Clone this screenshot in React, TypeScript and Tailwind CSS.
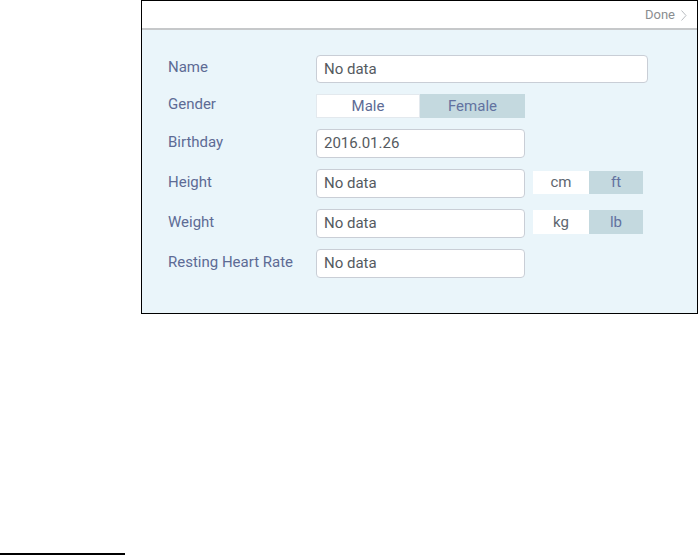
import * as React from "react";

const font = { fontFamily: "Roboto, 'Liberation Sans', sans-serif" };

function Field({ value, wide }: { value: string; wide?: boolean }) {
  return (
    <div
      className={`flex items-center h-full rounded-[4px] border border-[#c9ced6] bg-white pl-[7px] text-[15px] text-[#555a60] ${
        wide ? "w-[332px]" : "w-[209px]"
      }`}
    >
      {value}
    </div>
  );
}

function Toggle({ options, active, cell }: { options: string[]; active: number; cell: string[] }) {
  return (
    <div className="flex h-full">
      {options.map((o, i) => (
        <div
          key={o}
          className={`flex items-center justify-center text-[15px] ${cell[i]} ${
            i === active ? "bg-[#c4d9df] text-[#6272a0]" : "bg-white text-[#5d6b95] border border-[#e3e9ee]"
          }`}
        >
          {o}
        </div>
      ))}
    </div>
  );
}

function Row({ label, h, children }: { label: string; h: string; children: React.ReactNode }) {
  return (
    <div className={`flex items-center ${h}`}>
      <div className="w-[148px] text-[15px] text-[#5d6b95] leading-none -mt-[3px]">{label}</div>
      <div className="flex items-center h-full">{children}</div>
    </div>
  );
}

export default function App() {
  return (
    <div className="h-[555px] w-[698px] bg-white flex flex-col" style={font}>
      <div className="ml-[141px] w-[557px] h-[314px] border border-black flex flex-col">
        <header className="h-[29px] bg-white border-b-2 border-[#c6c8ca] flex items-center justify-end pr-[10px] gap-[6px]">
          <span className="text-[13px] text-[#8a8d90]">Done</span>
          <svg width="6" height="11" viewBox="0 0 6 11" className="mt-[1px]">
            <path d="M0.5 0.5 L5 5.5 L0.5 10.5" fill="none" stroke="#b8bcc0" strokeWidth="1" />
          </svg>
        </header>

        <div className="flex-1 bg-[#eaf5fa] pl-[26px] pt-[25px] flex flex-col gap-[11px]">
          <Row label="Name" h="h-[28px]">
            <Field value="No data" wide />
          </Row>
          <Row label="Gender" h="h-[24px]">
            <Toggle options={["Male", "Female"]} active={1} cell={["w-[104px]", "w-[105px]"]} />
          </Row>
          <Row label="Birthday" h="h-[29px]">
            <Field value="2016.01.26" />
          </Row>
          <Row label="Height" h="h-[29px]">
            <Field value="No data" />
            <div className="ml-[8px] h-[23px] -mt-[3px]">
              <div className="flex h-full">
                <div className="w-[56px] flex items-center justify-center bg-white text-[15px] text-[#5e6670]">cm</div>
                <div className="w-[54px] flex items-center justify-center bg-[#c4d9df] text-[15px] text-[#6272a0]">ft</div>
              </div>
            </div>
          </Row>
          <Row label="Weight" h="h-[29px]">
            <Field value="No data" />
            <div className="ml-[8px] h-[24px] -mt-[3px]">
              <div className="flex h-full">
                <div className="w-[56px] flex items-center justify-center bg-white text-[15px] text-[#5e6670]">kg</div>
                <div className="w-[54px] flex items-center justify-center bg-[#c4d9df] text-[15px] text-[#6272a0]">lb</div>
              </div>
            </div>
          </Row>
          <Row label="Resting Heart Rate" h="h-[29px]">
            <Field value="No data" />
          </Row>
        </div>
      </div>

      <div className="mt-auto h-[2px] w-[125px] bg-black" />
    </div>
  );
}
